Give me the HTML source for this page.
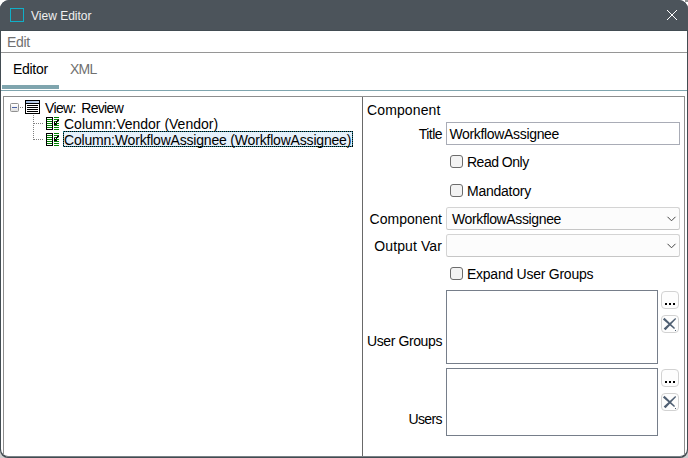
<!DOCTYPE html>
<html>
<head>
<meta charset="utf-8">
<title>View Editor</title>
<style>
html,body{margin:0;padding:0;background:#fff;}
body{width:688px;height:458px;overflow:hidden;position:relative;font-family:"Liberation Sans",sans-serif;font-size:14px;color:#000;}
.abs{position:absolute;}
#win{position:absolute;left:0;top:0;width:688px;height:458px;border-radius:9px 9px 8px 8px;background:linear-gradient(#4c545b 0,#4c545b 30px,#424c52 30px,#424c52 100%);overflow:hidden;}
#content{position:absolute;left:1px;top:31px;width:686px;height:425px;background:#fff;border-radius:0 0 7px 7px;}
#titlebar{position:absolute;left:0;top:0;width:688px;height:30px;background:#4c545b;}
#appicon{position:absolute;left:10px;top:8px;width:12px;height:12px;border:1px solid #10afc8;}
#title{position:absolute;left:31px;top:9px;font-size:12px;line-height:14px;color:#f0f0f0;white-space:nowrap;}
.t{position:absolute;white-space:nowrap;line-height:16px;height:16px;}
.r{text-align:right;}
.gray{color:#707070;}
.hline{position:absolute;height:1px;}
.vline{position:absolute;width:1px;}
.cb{position:absolute;width:11px;height:11px;border:1px solid #6c6c6c;border-radius:3px;background:#f3f3f3;}
.combo{position:absolute;left:446px;width:232px;height:21px;border:1px solid #d4d4d4;border-bottom-color:#c6c6c6;border-radius:2.5px;background:#fcfcfc;}
.list{position:absolute;left:446px;width:210px;border:1px solid #767e8a;background:#fff;}
.btn{position:absolute;left:661px;width:16px;height:16px;border:1px solid #d2d2d2;border-radius:4px;background:#fdfdfd;}
svg{position:absolute;overflow:visible;}
</style>
</head>
<body>
<div class="abs" style="left:0;top:448px;width:10px;height:10px;background:#cfcfcf;"></div><div class="abs" style="left:678px;top:448px;width:10px;height:10px;background:#cfcfcf;"></div>
<div class="abs" style="left:685px;top:0;width:3px;height:2px;background:#909090;"></div>
<div id="win">
  <div id="titlebar"></div>
  <div id="content"></div>
  <div class="abs" style="left:6px;top:456px;width:676px;height:1px;background:#7a8186;"></div>
</div>
<div id="appicon"></div>
<div id="title">View Editor</div>
<svg style="left:666px;top:9px" width="12" height="12" viewBox="0 0 12 12"><path d="M1 1 L11 11 M11 1 L1 11" stroke="#fff" stroke-width="1" fill="none"/></svg>

<!-- menu bar -->
<div class="t gray" style="left:7px;top:34px;letter-spacing:-0.35px;">Edit</div>
<div class="hline" style="left:1px;top:52px;width:686px;background:#969696;"></div>

<!-- tabs -->
<div class="t" style="left:13px;top:61px;letter-spacing:-0.3px;">Editor</div>
<div class="t gray" style="left:70px;top:61px;letter-spacing:-0.8px;">XML</div>
<div class="abs" style="left:2px;top:85px;width:57px;height:4px;background:#7fa5ae;"></div>
<div class="hline" style="left:1px;top:90px;width:686px;background:#7fa5ae;"></div>

<!-- panel borders -->
<div class="hline" style="left:3px;top:96px;width:682px;background:#8e8e8e;"></div>
<div class="vline" style="left:3px;top:96px;height:359px;background:#8e8e8e;"></div>
<div class="vline" style="left:362px;top:97px;height:359px;background:#696969;"></div>
<div class="vline" style="left:684px;top:96px;height:359px;background:#8e8e8e;"></div>

<!-- tree -->
<div class="abs" style="left:10px;top:103px;width:7px;height:7px;border:1px solid #919191;border-radius:1.5px;background:linear-gradient(#fff,#e0e0e0);"></div>
<div class="abs" style="left:12px;top:107px;width:5px;height:1px;background:#4b63a7;"></div>
<svg style="left:0;top:0" width="688" height="458" shape-rendering="crispEdges">
  <!-- connectors -->
  <g fill="#808080">
    <rect x="20" y="107" width="1" height="1"/><rect x="22" y="107" width="1" height="1"/>
  </g>
  <path d="M33.5 115 V140" stroke="#808080" stroke-width="1" stroke-dasharray="1 1" fill="none"/>
  <path d="M34 123.5 H43" stroke="#808080" stroke-width="1" stroke-dasharray="1 1" fill="none"/>
  <path d="M34 139.5 H43" stroke="#808080" stroke-width="1" stroke-dasharray="1 1" fill="none"/>
  <!-- view icon -->
  <rect x="25" y="100" width="15" height="14" fill="#000"/>
  <defs><linearGradient id="vg" x1="0" x2="1" y1="0" y2="0"><stop offset="0" stop-color="#9fb9e0"/><stop offset="1" stop-color="#c8d7ee"/></linearGradient></defs><rect x="26" y="101" width="13" height="2" fill="url(#vg)"/>
  <rect x="26" y="104" width="13" height="9" fill="#fff"/>
  <g fill="#000">
    <rect x="27" y="105" width="11" height="1"/><rect x="27" y="107" width="11" height="1"/>
    <rect x="27" y="109" width="11" height="1"/><rect x="27" y="111" width="11" height="1"/>
  </g>
  <!-- column icon (defined once, reused) -->
  <g id="colicon">
    <rect x="46" y="117" width="7" height="13" fill="#000"/>
    <rect x="47" y="118" width="5" height="11" fill="#fff"/>
    <g fill="#008000">
      <rect x="47" y="119" width="5" height="1"/><rect x="47" y="121" width="5" height="1"/>
      <rect x="47" y="123" width="5" height="1"/><rect x="47" y="125" width="5" height="1"/>
      <rect x="47" y="127" width="5" height="1"/>
      <rect x="54" y="117" width="5" height="1"/><rect x="54" y="119" width="4" height="1"/>
      <rect x="54" y="121" width="2" height="1"/><rect x="58" y="121" width="1" height="1" fill="#7fd07f"/>
      <rect x="56" y="123" width="3" height="1"/><rect x="54" y="125" width="5" height="1"/>
      <rect x="54" y="127" width="5" height="1"/><rect x="54" y="129" width="5" height="1"/>
    </g>
    <g fill="#000">
      <rect x="58" y="119" width="1" height="1" fill="#063006"/><rect x="57" y="120" width="2" height="1"/>
      <rect x="56" y="121" width="2" height="1"/><rect x="54" y="122" width="1" height="1"/>
      <rect x="56" y="122" width="1" height="1"/><rect x="54" y="123" width="2" height="1"/>
      <rect x="54" y="124" width="3" height="1"/>
    </g>
  </g>
  <use href="#colicon" y="16"/>
</svg>
<div class="t" style="left:45px;top:100px;letter-spacing:-0.65px;word-spacing:2.2px;">View: Review</div>
<div class="t" style="left:64px;top:116px;">Column:Vendor (Vendor)</div>
<svg style="left:0;top:0" width="688" height="458" shape-rendering="crispEdges">
  <rect x="63.5" y="131.5" width="289" height="15" fill="#e5f0fa" stroke="#23808f" stroke-width="1"/>
  <rect x="63.5" y="131.5" width="289" height="15" fill="none" stroke="#000" stroke-width="1" stroke-dasharray="1 1"/>
</svg>
<div class="t" style="left:64px;top:132px;letter-spacing:-0.19px;">Column:WorkflowAssignee (WorkflowAssignee)</div>

<!-- form -->
<div class="t" style="left:367px;top:102px;letter-spacing:0.12px;">Component</div>
<div class="t r" style="right:246px;top:126px;letter-spacing:-0.55px;">Title</div>
<div class="abs" style="left:446px;top:122px;width:232px;height:21px;border:1px solid #a9acb6;background:#fff;"></div>
<div class="t" style="left:449.4px;top:126px;letter-spacing:-0.33px;">WorkflowAssignee</div>

<div class="cb" style="left:450px;top:155px;"></div>
<div class="t" style="left:467px;top:154px;letter-spacing:-0.5px;">Read Only</div>
<div class="cb" style="left:450px;top:184px;"></div>
<div class="t" style="left:467px;top:183px;letter-spacing:-0.25px;">Mandatory</div>

<div class="t r" style="right:246px;top:211px;">Component</div>
<div class="combo" style="top:207px;"></div>
<div class="t" style="left:452px;top:211px;letter-spacing:-0.37px;">WorkflowAssignee</div>
<svg style="left:667px;top:216px" width="9" height="6" viewBox="0 0 9 6"><path d="M0.5 0.8 L4.5 4.8 L8.5 0.8" stroke="#444" stroke-width="1" fill="none"/></svg>

<div class="t r" style="right:246px;top:238px;letter-spacing:0.1px;">Output Var</div>
<div class="combo" style="top:234px;"></div>
<svg style="left:667px;top:243px" width="9" height="6" viewBox="0 0 9 6"><path d="M0.5 0.8 L4.5 4.8 L8.5 0.8" stroke="#444" stroke-width="1" fill="none"/></svg>

<div class="cb" style="left:450px;top:267px;"></div>
<div class="t" style="left:467px;top:266px;letter-spacing:-0.25px;">Expand User Groups</div>

<div class="t r" style="right:246px;top:333px;letter-spacing:-0.4px;">User Groups</div>
<div class="list" style="top:290px;height:72px;"></div>
<div class="btn" style="top:291px;"></div>
<div class="btn" style="top:315px;"></div>

<div class="t r" style="right:246px;top:411px;letter-spacing:-0.6px;">Users</div>
<div class="list" style="top:368px;height:66px;"></div>
<div class="btn" style="top:369px;"></div>
<div class="btn" style="top:393px;"></div>

<svg style="left:0;top:0" width="688" height="458">
  <g fill="#000" shape-rendering="crispEdges">
    <rect x="665" y="303" width="2" height="2"/><rect x="669" y="303" width="2" height="2"/><rect x="673" y="303" width="2" height="2"/>
    <rect x="665" y="381" width="2" height="2"/><rect x="669" y="381" width="2" height="2"/><rect x="673" y="381" width="2" height="2"/>
  </g>
  <g id="xicon" fill="#4f5f72" stroke="none">
    <polygon points="663.7,328.5 665.5,330.3 676.1,318.9 675.3,318.1"/>
    <polygon points="664.5,317.8 662.9,319.4 674.1,328.9 675,328"/>
    <rect x="675" y="330" width="1" height="1"/>
  </g>
  <use href="#xicon" y="78"/>
</svg>
</body>
</html>
